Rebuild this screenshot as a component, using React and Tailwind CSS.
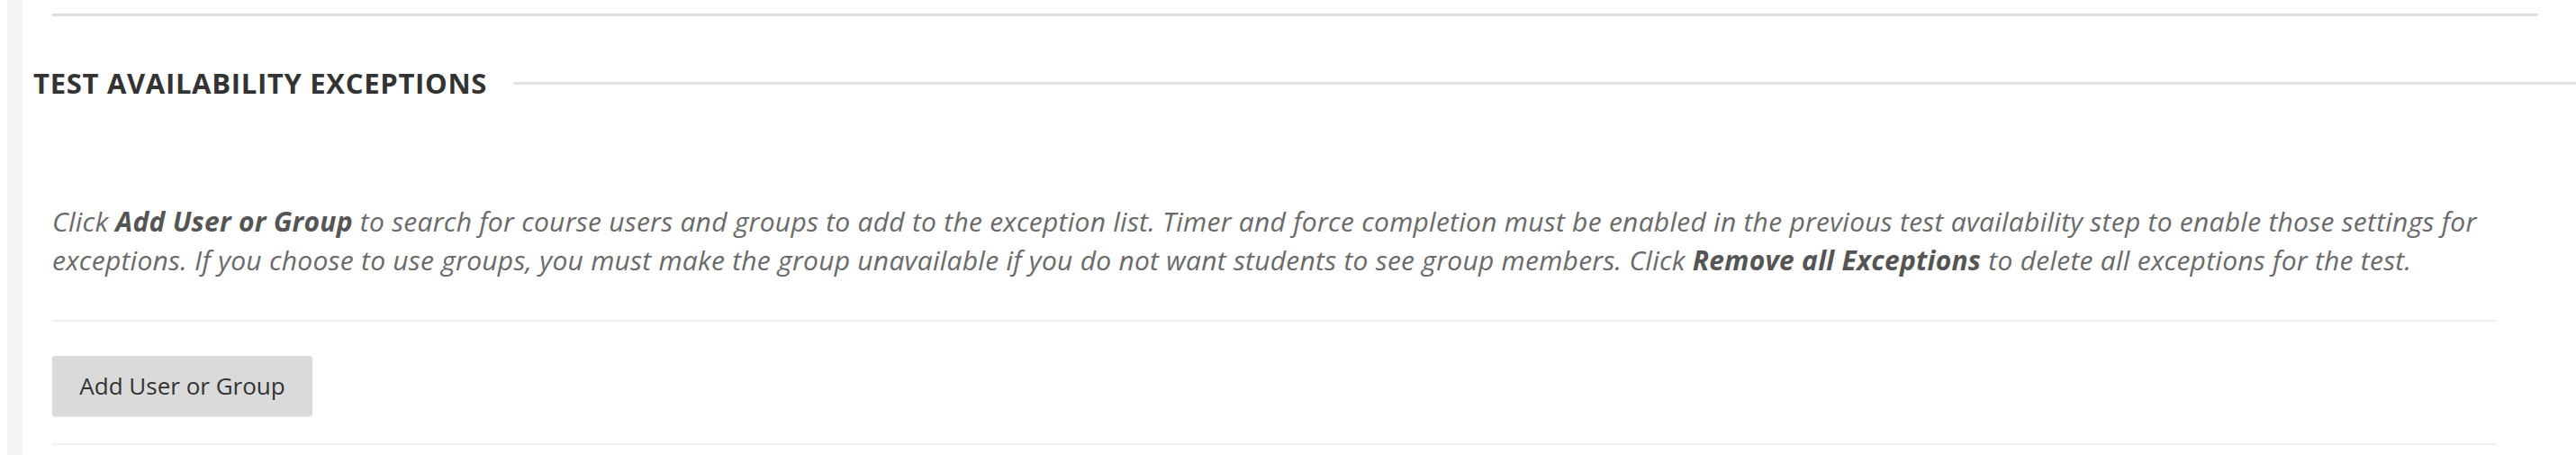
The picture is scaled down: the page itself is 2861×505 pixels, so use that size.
export default function App() {
  return (
    <div className="flex min-h-[505px] bg-white font-['Open_Sans',sans-serif]">
      <div className="ml-[8px] w-[17px] shrink-0 bg-[#f5f5f5]"></div>

      <div className="flex-1">
        <div className="mt-[15px] ml-[33px] mr-[42px] h-[3px] bg-[#dedede]"></div>

        <div className="mt-[54px] flex items-center pl-[12px]">
          <h2 className="text-[31px] leading-[40px] font-bold uppercase tracking-[0.7px] text-[#333333]">
            Test Availability Exceptions
          </h2>
          <div className="ml-[29px] h-[3px] flex-1 bg-[#e2e2e2]"></div>
        </div>

        <div className="ml-[33px] mr-[88px]">
          <p className="mt-[112px] text-[30px] leading-[43px] italic tracking-[0.25px] text-[#6a6a6a]">
            Click <strong className="font-bold text-[#555555]">Add User or Group</strong> to search for course
            users and groups to add to the exception list. Timer and force completion must be enabled in the
            previous test availability step to enable those settings for exceptions. If you choose to use
            groups, you must make the group unavailable if you do not want students to see group members.
            Click <strong className="font-bold text-[#555555]">Remove all Exceptions</strong> to delete all
            exceptions for the test.
          </p>

          <div className="mt-[45px] h-[2px] bg-[#f0f0f0]"></div>

          <button className="mt-[38px] h-[67px] w-[289px] rounded-[3px] bg-[#dadada] text-[26px] text-[#333333] shadow-[0_1px_1px_rgba(0,0,0,0.08)]">
            Add User or Group
          </button>

          <div className="mt-[30px] h-[2px] bg-[#f0f0f0]"></div>
        </div>
      </div>
    </div>
  );
}
